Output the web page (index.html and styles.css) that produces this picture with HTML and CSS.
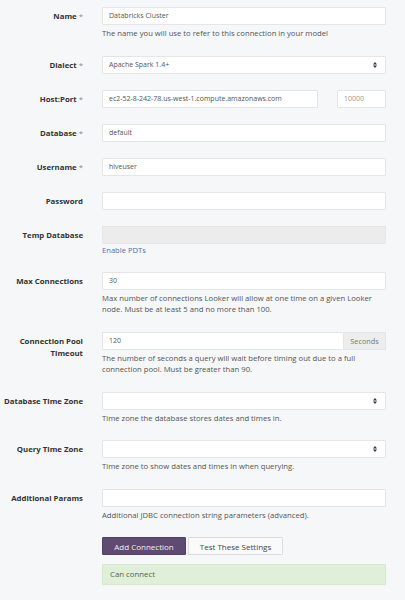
FILE: index.html
```html
<!DOCTYPE html>
<html>
<head>
<meta charset="utf-8">
<link rel="stylesheet" href="styles.css">
</head>
<body>
<form class="form">
  <div class="row">
    <label class="label">Name <span class="req">*</span></label>
    <div class="field">
      <div class="input">Databricks Cluster</div>
      <p class="help">The name you will use to refer to this connection in your model</p>
    </div>
  </div>
  <div class="row">
    <label class="label">Dialect <span class="req">*</span></label>
    <div class="field">
      <div class="input select">Apache Spark 1.4+<span class="arrows"><svg width="4" height="6" viewBox="0 0 4 6"><path d="M0 2.5L2 0L4 2.5Z M0 3.5L2 6L4 3.5Z" fill="#333"/></svg></span></div>
    </div>
  </div>
  <div class="row">
    <label class="label">Host:Port <span class="req">*</span></label>
    <div class="field hostport">
      <div class="input host">ec2-52-8-242-78.us-west-1.compute.amazonaws.com</div>
      <div class="input port muted">10000</div>
    </div>
  </div>
  <div class="row">
    <label class="label">Database <span class="req">*</span></label>
    <div class="field"><div class="input">default</div></div>
  </div>
  <div class="row">
    <label class="label">Username <span class="req">*</span></label>
    <div class="field"><div class="input">hiveuser</div></div>
  </div>
  <div class="row">
    <label class="label">Password</label>
    <div class="field"><div class="input"></div></div>
  </div>
  <div class="row">
    <label class="label">Temp Database</label>
    <div class="field">
      <div class="input disabled"></div>
      <a class="link">Enable PDTs</a>
    </div>
  </div>
  <div class="row">
    <label class="label">Max Connections</label>
    <div class="field">
      <div class="input">30</div>
      <p class="help">Max number of connections Looker will allow at one time on a given Looker node. Must be at least 5 and no more than 100.</p>
    </div>
  </div>
  <div class="row">
    <label class="label">Connection Pool Timeout</label>
    <div class="field">
      <div class="group">
        <div class="input grow">120</div>
        <div class="addon">Seconds</div>
      </div>
      <p class="help">The number of seconds a query will wait before timing out due to a full connection pool. Must be greater than 90.</p>
    </div>
  </div>
  <div class="row">
    <label class="label">Database Time Zone</label>
    <div class="field">
      <div class="input select"><span class="arrows"><svg width="4" height="6" viewBox="0 0 4 6"><path d="M0 2.5L2 0L4 2.5Z M0 3.5L2 6L4 3.5Z" fill="#333"/></svg></span></div>
      <p class="help">Time zone the database stores dates and times in.</p>
    </div>
  </div>
  <div class="row">
    <label class="label">Query Time Zone</label>
    <div class="field">
      <div class="input select"><span class="arrows"><svg width="4" height="6" viewBox="0 0 4 6"><path d="M0 2.5L2 0L4 2.5Z M0 3.5L2 6L4 3.5Z" fill="#333"/></svg></span></div>
      <p class="help">Time zone to show dates and times in when querying.</p>
    </div>
  </div>
  <div class="row">
    <label class="label">Additional Params</label>
    <div class="field">
      <div class="input"></div>
      <p class="help">Additional JDBC connection string parameters (advanced).</p>
    </div>
  </div>
  <div class="row actions">
    <div></div>
    <div class="field">
      <div class="buttons">
        <button type="button" class="btn primary">Add Connection</button>
        <button type="button" class="btn">Test These Settings</button>
      </div>
      <div class="alert">Can connect</div>
    </div>
  </div>
</form>
</body>
</html>
```

FILE: styles.css
```css
html, body {
  margin: 0;
  padding: 0;
  background: #f6f7f9;
}
body {
  font-family: "Open Sans", "Liberation Sans", sans-serif;
  color: #333;
  width: 405px;
  height: 600px;
  overflow: hidden;
}
.form {
  padding-top: 7px;
}
.row {
  display: grid;
  grid-template-columns: 83px 284px;
  column-gap: 19px;
  margin-bottom: 16px;
}
.label {
  font-size: 7.8px;
  font-weight: 700;
  line-height: 12px;
  text-align: right;
  padding-top: 3px;
  color: #333;
}
.req {
  font-weight: 400;
  color: #888;
}
.field {
  min-width: 0;
}
.input {
  box-sizing: border-box;
  height: 18px;
  background: #fff;
  border: 1px solid #e3e5e8;
  border-radius: 1px;
  font-size: 7px;
  line-height: 16px;
  padding: 0 6px;
  color: #555;
  white-space: nowrap;
  overflow: hidden;
  position: relative;
}
.muted { color: #999; }
.select .arrows {
  position: absolute;
  right: 8px;
  top: 5px;
  line-height: 0;
}
.disabled {
  background: #ececec;
  border-color: #e6e6e6;
}
.hostport {
  display: flex;
  justify-content: space-between;
}
.host { width: 216px; }
.port { width: 49px; }
.group {
  display: flex;
}
.grow {
  flex: 1;
  border-right: none;
}
.addon {
  box-sizing: border-box;
  width: 43px;
  height: 18px;
  background: #ededed;
  border: 1px solid #e3e5e8;
  font-size: 7.3px;
  line-height: 16px;
  text-align: center;
  color: #777;
}
.help {
  margin: 3px 0 0;
  font-size: 7.7px;
  line-height: 11.5px;
  color: #555;
}
.link {
  display: block;
  font-size: 7.6px;
  line-height: 12px;
  color: #4b73a8;
}
.actions {
  margin-bottom: 0;
}
.buttons {
  display: flex;
  gap: 2px;
}
.btn {
  box-sizing: border-box;
  height: 18px;
  font-family: "Open Sans", "Liberation Sans", sans-serif;
  font-size: 8px;
  padding: 0;
  border: 1px solid #dcdcdc;
  border-radius: 1px;
  background: #fafafa;
  color: #444;
  margin: 0;
}
.btn.primary {
  width: 84px;
  background: #5f4b72;
  border-color: #51405f;
  color: #f2eef5;
}
.btn:not(.primary) {
  width: 95px;
}
.alert {
  margin-top: 9px;
  box-sizing: border-box;
  height: 21px;
  background: #e0efd9;
  border: 1px solid #d5e8cb;
  border-radius: 1px;
  font-size: 7.8px;
  line-height: 19px;
  padding: 0 7px;
  color: #55654c;
}
```
